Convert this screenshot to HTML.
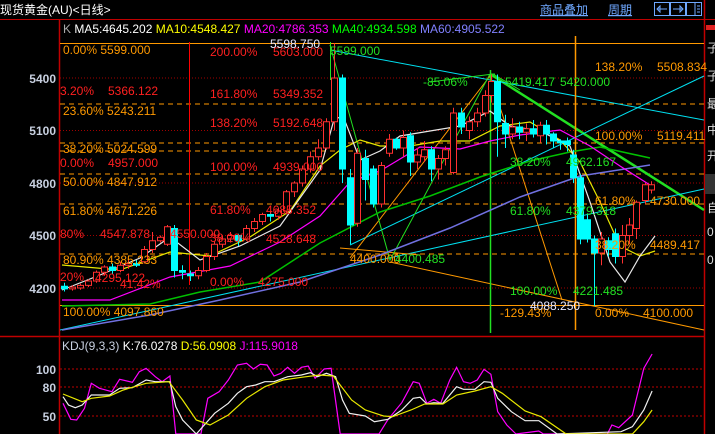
<!DOCTYPE html>
<html><head><meta charset="utf-8"><style>
html,body{margin:0;padding:0;background:#000;width:715px;height:434px;overflow:hidden}
svg{display:block}
text{font-family:"Liberation Sans","Noto Sans CJK SC",sans-serif;font-size:12px}
</style></head><body>
<svg id="s" width="715" height="434" xmlns="http://www.w3.org/2000/svg">
<rect width="715" height="434" fill="#000"/>
<text x="0" y="14" fill="#fff" font-size="13">现货黄金(AU)&lt;日线&gt;</text>
<text x="540" y="14" fill="#6fa8ff" font-size="12" text-decoration="underline">商品叠加</text>
<text x="608" y="14" fill="#6fa8ff" font-size="12" text-decoration="underline">周期</text>
<g fill="none" stroke="#6fa8ff" stroke-width="1">
<rect x="654.5" y="2.5" width="15" height="13"/><rect x="670.5" y="2.5" width="15" height="13"/><rect x="686.5" y="2.5" width="15" height="13"/>
<path d="M657 9h3l0-3-3 3 3 3v-3h7"/><path d="M683 9h-3v-3l3 3-3 3v-3h-7"/><path d="M695 3v13M697 6h3M697 9h3M697 12h3"/>
</g>
<line x1="0" y1="19.5" x2="715" y2="19.5" stroke="#c00000"/>
<line x1="59.5" y1="20" x2="59.5" y2="434" stroke="#c00000" stroke-width="1.5"/>
<line x1="704.5" y1="0" x2="704.5" y2="434" stroke="#c00000" stroke-width="1.5"/>
<line x1="0" y1="336.5" x2="704" y2="336.5" stroke="#c00000" stroke-width="1.5"/>
<rect x="706" y="25" width="9" height="5" fill="#e02020"/>
<g fill="#ddd" font-size="13"><text x="707" y="52">子</text><text x="707" y="80">子</text><text x="707" y="108">最</text><text x="707" y="134">中</text><text x="707" y="160">开</text><text x="707" y="186">最</text><text x="707" y="212">自</text><text x="707" y="236">0</text><text x="707" y="264">0</text></g>
<rect x="705" y="174" width="10" height="20" fill="#333"/>
<g fill="#c8d0e0" font-weight="bold" font-size="13" text-anchor="end">
<text x="56" y="83">5400</text><text x="56" y="135">5100</text><text x="56" y="188">4800</text><text x="56" y="240">4500</text><text x="56" y="293">4200</text>
<text x="56" y="374">100</text><text x="56" y="392">80</text><text x="56" y="421">50</text>
</g>
<g id="grid"></g>
<g id="lines"></g>
<g id="cand"></g>
<g id="lab"></g>
<text x="63" y="33"><tspan fill="#aaa">K </tspan><tspan fill="#fff"> MA5:4645.202 </tspan><tspan fill="#ffff00">MA10:4548.427 </tspan><tspan fill="#ff00ff">MA20:4786.353 </tspan><tspan fill="#00ff00">MA40:4934.598 </tspan><tspan fill="#8080ff">MA60:4905.522</tspan></text>
<text x="62" y="350"><tspan fill="#c8d0e0">KDJ(9,3,3) </tspan><tspan fill="#fff">K:76.0278 </tspan><tspan fill="#ffff00">D:56.0908 </tspan><tspan fill="#ff00ff">J:115.9018</tspan></text>
</svg>
<script>
var NS="http://www.w3.org/2000/svg";
function el(p,t,a,txt){var e=document.createElementNS(NS,t);for(var k in a)e.setAttribute(k,a[k]);if(txt)e.textContent=txt;document.getElementById(p).appendChild(e);return e;}
function Y(p){return 288-(p-4200)*0.175;}
// grid
[78,130.5,183,235.5,288].forEach(function(y){el('grid','line',{x1:60,x2:704,y1:y,y2:y,stroke:'#a00000','stroke-dasharray':'1 2'});});
[369,387,416].forEach(function(y){el('grid','line',{x1:60,x2:704,y1:y,y2:y,stroke:'#c00000','stroke-dasharray':'2 2'});});
[104,143,174,204,254].forEach(function(y){el('grid','line',{x1:60,x2:704,y1:y,y2:y,stroke:'#ff9900','stroke-dasharray':'5 4'});});
[43.5,305.5].forEach(function(y){el('grid','line',{x1:60,x2:704,y1:y,y2:y,stroke:'#ff9900'});});
el('grid','line',{x1:60,x2:360,y1:151,y2:151,stroke:'#ff9900','stroke-dasharray':'5 4'});
// lines
function pl(pts,c,w){el('lines','polyline',{points:pts,fill:'none',stroke:c,'stroke-width':w||1});}
pl('490,74 704,210','#22e022',2.5);
pl('330,50 704,120','#00e0f0');pl('350,245 704,76','#00e0f0');pl('60,330 704,189','#00e0f0');
pl('350,258 490,76 562,300','#ff9900');pl('390,262 704,330','#ff9900');pl('340,248 420,255','#ff9900');
pl('330,45 390,260 490,74','#22e022');pl('490,74 495,74','#22e022');
pl('430,82 493,74 520,90','#22e022');
el('lines','line',{x1:490.5,x2:490.5,y1:70,y2:333,stroke:'#22e022',"stroke-width":1.5});
el('lines','line',{x1:575.5,x2:575.5,y1:36,y2:330,stroke:'#ff9900',"stroke-width":1.5});
el('lines','line',{x1:189.5,x2:189.5,y1:42,y2:285,stroke:'#ff0000'});
el('lines','line',{x1:330.5,x2:330.5,y1:42,y2:80,stroke:'#22e022'});
pl('62,330 150,315 220,300 300,282 380,255 450,228 520,197 580,176 650,165','#7070e0',1.5);
pl('62,306 150,304 200,292 260,282 320,243 380,212 430,196 480,177 530,161 570,152 600,147 650,158','#00c000',1.5);
pl('62,300 110,300 170,277 230,266 280,242 320,216 350,182 380,171 420,147 460,149 490,141 520,135 560,130 590,146 620,166 650,185','#ff00ff',1.2);
pl('62,265 120,270 170,252 210,256 250,237 290,211 320,166 340,150 360,140 380,146 410,146 440,141 470,141 500,126 530,122 560,140 580,162 600,202 620,246 640,256 655,251','#e8e800',1.2);
pl('62,290 100,275 140,258 170,237 200,260 240,246 280,226 320,170 335,116 345,121 360,160 380,151 400,136 430,131 460,126 490,111 510,126 540,131 570,146 590,202 610,262 625,282 640,256 655,236','#e8e8e8',1.2);
// candles
var C=[[64,4210,4195,4230,4180],[72,4195,4205,4215,4185],[80,4200,4215,4225,4190],[88,4215,4240,4250,4205],[96,4240,4290,4300,4230],[104,4290,4320,4330,4270],[112,4320,4300,4340,4280],[120,4300,4330,4350,4290],[128,4330,4340,4370,4310],[136,4340,4330,4360,4320],[144,4350,4420,4440,4340],[152,4420,4470,4520,4400],[160,4470,4490,4500,4460],[167,4450,4550,4560,4440],[174,4540,4300,4560,4260],[182,4300,4290,4330,4250],[190,4280,4270,4300,4240],[198,4270,4300,4320,4250],[206,4300,4380,4400,4290],[214,4380,4450,4470,4360],[222,4450,4480,4500,4430],[230,4480,4500,4520,4460],[238,4500,4470,4510,4440],[246,4480,4540,4560,4470],[254,4540,4580,4600,4520],[262,4580,4620,4630,4560],[270,4620,4610,4640,4580],[278,4610,4640,4660,4590],[286,4640,4750,4760,4620],[294,4750,4800,4810,4720],[302,4800,4880,4900,4780],[310,4880,4950,4980,4860],[318,4950,5000,5050,4930],[326,5000,5150,5170,4990],[334,5150,5400,5599,5100],[342,5400,4880,5420,4800],[350,4830,4560,4880,4450],[357,4570,4970,5000,4550],[365,4940,4820,4990,4700],[373,4880,4680,4900,4660],[381,4680,4900,4920,4660],[389,4970,5050,5080,4950],[396,5050,5000,5060,4990],[403,5000,5060,5100,4950],[410,5070,4920,5090,4840],[417,4920,4960,5000,4880],[424,4950,4990,5040,4920],[431,4990,4880,5010,4810],[438,4880,4940,4960,4820],[445,4940,4990,5010,4900],[453,4860,5200,5230,4850],[461,5200,5120,5230,5080],[469,5100,5150,5180,5050],[477,5150,5200,5230,5120],[485,5200,5300,5330,5180],[491,5300,5380,5420,5260],[497,5380,5150,5420,4950],[505,5140,5080,5190,5000],[512,5080,5120,5170,5050],[519,5120,5090,5150,5050],[526,5090,5110,5140,5040],[533,5110,5080,5160,5060],[540,5070,5130,5150,5030],[546,5130,5080,5160,5020],[553,5080,5040,5090,5000],[560,5040,5030,5050,4990],[567,5040,5020,5060,4980],[573,4960,4830,4990,4800],[580,4830,4480,4850,4450],[587,4590,4480,4620,4460],[594,4480,4400,4500,4097],[601,4400,4480,4520,4330],[608,4470,4420,4490,4380],[615,4510,4380,4540,4340],[622,4380,4500,4560,4340],[629,4500,4560,4600,4450],[636,4540,4690,4700,4480],[645,4700,4790,4800,4680],[651,4760,4790,4810,4740]];
C.forEach(function(c){var x=c[0],up=c[2]>=c[1],col=up?'#ff3030':'#00ffff';
el('cand','line',{x1:x+.5,x2:x+.5,y1:Y(c[3]),y2:Y(c[4]),stroke:col});
var t=Y(Math.max(c[1],c[2])),b=Y(Math.min(c[1],c[2]));if(b-t<1)b=t+1;
el('cand','rect',{x:x-2.5,y:t,width:6,height:b-t,fill:up?'#000':col,stroke:col});});
// labels
var L=[[63,54,'#ff9900','0.00% 5599.000'],[210,56,'#ff2020','200.00%'],[273,56,'#ff2020','5603.000'],[330,55,'#22e022','5599.000'],[270,48,'#e8e8ff','5598.750'],
[60,95,'#ff2020','3.20%'],[108,95,'#ff2020','5366.122'],[210,98,'#ff2020','161.80%'],[273,98,'#ff2020','5349.352'],[63,115,'#ff9900','23.60% 5243.211'],
[210,127,'#ff2020','138.20%'],[273,127,'#ff2020','5192.648'],[63,153,'#ff9900','38.20% 5024.599'],[60,167,'#ff2020','0.00%'],[108,167,'#ff2020','4957.000'],
[210,171,'#ff2020','100.00%'],[273,171,'#ff2020','4939.000'],[63,186,'#ff9900','50.00% 4847.912'],[63,215,'#ff9900','61.80% 4671.226'],[210,214,'#ff2020','61.80%'],[266,214,'#ff2020','4685.352'],
[60,238,'#ff2020','80%'],[100,238,'#ff2020','4547.878'],[170,238,'#ff2020','4550.000'],[210,242,'#ff2020','38.20%'],[266,243,'#ff2020','4528.648'],[63,264,'#ff9900','80.90% 4385.233'],
[60,281,'#ff2020','20%'],[95,282,'#ff2020','4295.122'],[120,288,'#ff2020','41.42%'],[210,286,'#ff2020','0.00%'],[258,286,'#ff2020','4275.000'],[63,316,'#ff9900','100.00% 4097.860'],
[350,263,'#ff9900','4400.000'],[395,263,'#22e022','4400.485'],[423,86,'#22e022','-85.06%'],[505,86,'#22e022','5419.417'],[560,86,'#22e022','5420.000'],
[595,71,'#ff9900','138.20%'],[657,71,'#ff9900','5508.834'],[595,140,'#ff9900','100.00%'],[657,140,'#ff9900','5119.411'],[510,166,'#22e022','38.20%'],[566,166,'#22e022','4962.167'],
[595,205,'#ff9900','61.80%'],[650,205,'#ff9900','4730.000'],[510,215,'#22e022','61.80%'],[566,215,'#22e022','4379.318'],[595,249,'#ff9900','38.20%'],[650,249,'#ff9900','4489.417'],
[510,295,'#22e022','100.00%'],[573,295,'#22e022','4221.485'],[530,310,'#e8e8ff','4088.250'],[500,317,'#ff9900','-129.43%'],[595,317,'#ff9900','0.00%'],[643,317,'#ff9900','4100.000']];
L.forEach(function(l){el('lab','text',{x:l[0],y:l[1],fill:l[2]},l[3]);});
// KDJ
function kd(arr,c){var s=arr.map(function(p){return (p[0]/2.19).toFixed(1)+','+Math.min(434,330+p[1]/3).toFixed(1);}).join(' ');pl(s,c,1.2);}
kd([[138,220],[155,268],[168,270],[185,235],[200,160],[218,175],[245,185],[262,148],[290,157],[305,125],[320,115],[340,140],[355,155],[372,138],[385,320],[440,320],[455,205],[480,185],[500,150],[520,105],[540,100],[555,117],[570,103],[585,105],[600,138],[615,130],[630,112],[645,130],[660,112],[675,108],[690,145],[710,117],[725,115],[745,320],[830,320],[850,268],[880,218],[905,155],[918,160],[935,220],[950,208],[965,220],[985,150],[1000,112],[1015,155],[1030,160],[1045,150],[1060,118],[1075,133],[1090,245],[1110,285],[1130,320],[1180,303],[1190,320],[1330,320],[1340,285],[1355,293],[1385,255],[1410,115],[1428,72]],'#ff00ff');
kd([[138,200],[150,225],[165,233],[180,225],[200,195],[240,195],[262,175],[290,173],[320,150],[340,155],[372,155],[385,230],[400,270],[430,320],[470,250],[500,220],[520,190],[540,170],[560,165],[580,155],[600,155],[630,140],[660,135],[680,128],[695,140],[715,130],[735,140],[750,210],[765,250],[800,258],[820,275],[850,268],[880,240],[905,205],[920,202],[935,222],[950,218],[970,220],[1000,170],[1015,178],[1040,178],[1060,155],[1075,157],[1090,205],[1120,245],[1150,272],[1180,272],[1220,320],[1360,305],[1385,290],[1410,240],[1428,183]],'#f0f0f0');
kd([[138,192],[180,215],[200,205],[240,198],[270,180],[320,160],[370,155],[400,210],[430,270],[460,285],[500,255],[540,205],[580,170],[620,150],[660,142],[700,135],[730,138],[770,210],[800,240],[840,258],[860,260],[900,240],[930,222],[970,222],[1000,195],[1040,183],[1075,170],[1100,190],[1150,243],[1185,260],[1240,320],[1385,320],[1410,275],[1428,240]],'#e8e800');
</script>
</body></html>
